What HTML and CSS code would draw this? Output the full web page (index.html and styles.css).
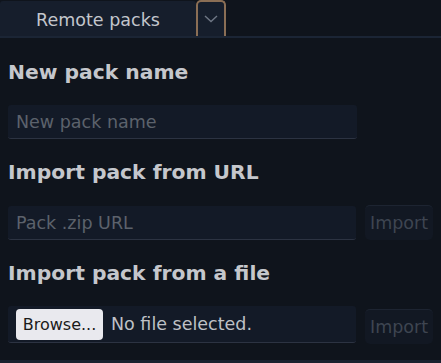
FILE: index.html
```html
<!DOCTYPE html>
<html lang="en">
  <head>
    <meta charset="UTF-8" />
    <meta name="viewport" content="width=device-width, initial-scale=1.0" />
    <title>Packs</title>
    <link rel="stylesheet" href="styles.css">
  </head>
  <body>
    <div class="tabs">
      <button class="tab">Remote packs</button>
      <button class="tab-menu">
        <svg width="14" height="8" viewBox="0 0 14 8">
          <path d="M1 1 L7 6.5 L13 1" fill="none" stroke="#6f7785" stroke-width="1.4" />
        </svg>
      </button>
    </div>
    <div class="content">
      <h2 class="title">New pack name</h2>
      <div class="row">
        <input class="field" type="text" placeholder="New pack name" />
      </div>

      <h2 class="title">Import pack from URL</h2>
      <div class="row">
        <input class="field" type="text" placeholder="Pack .zip URL" />
        <button class="import" disabled>Import</button>
      </div>

      <h2 class="title">Import pack from a file</h2>
      <div class="row file-row">
        <div class="field file-field">
          <label class="browse">Browse...</label>
          <span class="file-name">No file selected.</span>
        </div>
        <button class="import" disabled>Import</button>
      </div>
    </div>
  </body>
</html>
```

FILE: styles.css
```css
* {
  box-sizing: border-box;
  margin: 0;
  padding: 0;
}

body {
  background-color: #0f141c;
  font-family: "DejaVu Sans", sans-serif;
  height: 363px;
  border-bottom: 3px solid #1a2230;
}

/*TABS*/
.tabs {
  display: flex;
  align-items: flex-end;
  height: 38px;
  border-bottom: 2px solid #1b2535;
}

.tab {
  width: 196px;
  height: 35px;
  background-color: #161e2c;
  color: #c3c6cc;
  border: none;
  border-radius: 3px 3px 0 0;
  font-family: "DejaVu Sans", sans-serif;
  font-size: 17.5px;
  padding-top: 2px;
}

.tab-menu {
  width: 30px;
  height: 36px;
  background-color: #161e2c;
  border: 2px solid #8a6e55;
  border-bottom: none;
  border-radius: 5px 5px 0 0;
  display: flex;
  align-items: center;
  justify-content: center;
}

/*CONTENT*/
.content {
  padding: 22px 8px 0 8px;
}

.title {
  color: #c5c7cc;
  font-size: 20.3px;
  font-weight: bold;
  line-height: 24px;
  margin-bottom: 21px;
}

.row {
  display: flex;
  align-items: flex-end;
  gap: 9px;
  margin-bottom: 21px;
}

.file-row {
  align-items: flex-start;
}

.file-row .import {
  margin-top: 3px;
}

.field {
  width: 349px;
  height: 34px;
  background-color: #131a27;
  border: none;
  border-bottom: 1px solid #2c3342;
  border-radius: 3px;
  padding: 0 8px;
  color: #c3c6cc;
  font-family: "DejaVu Sans", sans-serif;
  font-size: 17.5px;
}

.field::placeholder {
  color: #5c626c;
}

.file-field {
  height: 37px;
  display: flex;
  align-items: center;
  gap: 8px;
}

.browse {
  background-color: #e9e9ee;
  color: #1a1a1a;
  border-radius: 4px;
  height: 31px;
  width: 87px;
  display: flex;
  align-items: center;
  justify-content: center;
  font-size: 16px;
}

.file-name {
  color: #bfc1c6;
  font-size: 17.5px;
}

.import {
  width: 68px;
  height: 35px;
  background-color: #121823;
  border: none;
  border-top: 1px solid #1d2431;
  border-radius: 5px;
  color: #3e4551;
  font-family: "DejaVu Sans", sans-serif;
  font-size: 17.5px;
}
```
